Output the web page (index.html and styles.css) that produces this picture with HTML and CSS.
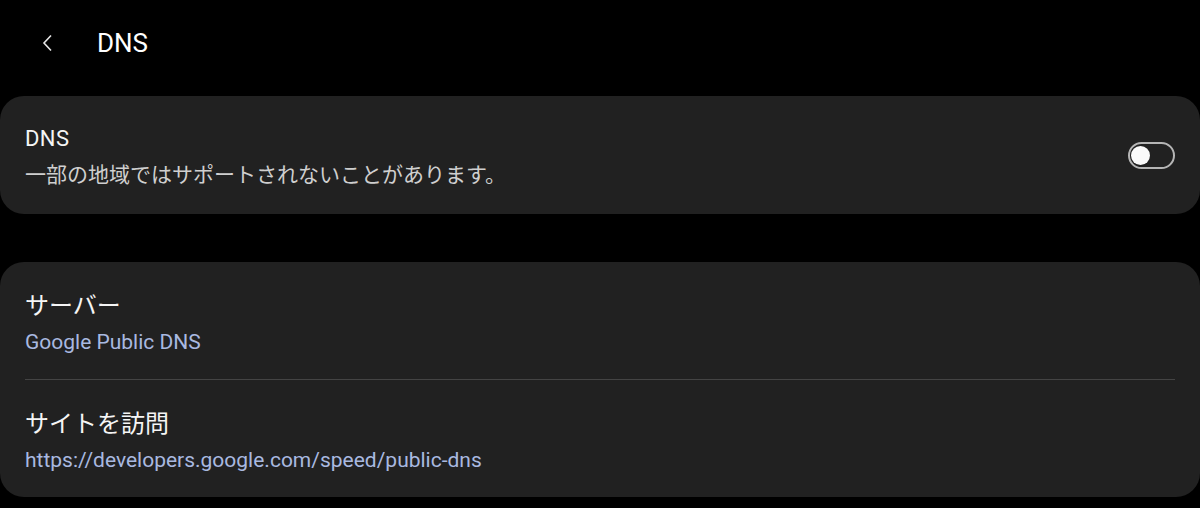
FILE: index.html
```html
<!DOCTYPE html>
<html lang="ja">
<head>
    <meta charset="UTF-8">
    <meta name="viewport" content="width=device-width, initial-scale=1.0">
    <title>DNS</title>
    <link rel="stylesheet" href="styles.css">
</head>
<body>
    <header class="top-bar">
        <button class="back" aria-label="戻る">
            <svg width="12" height="18" viewBox="0 0 12 18">
                <path d="M9 1.5 L2 9 L9 16.5" fill="none" stroke="#e6e6e6" stroke-width="1.6"/>
            </svg>
        </button>
        <h1>DNS</h1>
    </header>

    <main>
        <section class="card">
            <div class="row toggle-row">
                <div class="text">
                    <p class="title">DNS</p>
                    <p class="sub">一部の地域ではサポートされないことがあります。</p>
                </div>
                <div class="switch"><span class="knob"></span></div>
            </div>
        </section>

        <section class="card">
            <div class="row">
                <div class="text">
                    <p class="title jp">サーバー</p>
                    <p class="link">Google Public DNS</p>
                </div>
            </div>
            <div class="divider"></div>
            <div class="row">
                <div class="text">
                    <p class="title jp">サイトを訪問</p>
                    <p class="link">https://developers.google.com/speed/public-dns</p>
                </div>
            </div>
        </section>
    </main>
</body>
</html>
```

FILE: styles.css
```css
*{
    margin: 0;
    padding: 0;
    box-sizing: border-box;
}
body{
    background-color: #000;
    color: #f2f2f2;
    font-family: Roboto, "Noto Sans CJK JP", sans-serif;
    overflow: hidden;
}
.top-bar{
    height: 96px;
    display: flex;
    align-items: center;
    padding-left: 42px;
    padding-bottom: 10px;
}
.back{
    background: none;
    border: none;
    width: 14px;
    height: 20px;
    display: flex;
    align-items: center;
}
.top-bar h1{
    font-size: 26px;
    font-weight: 400;
    margin-left: 41px;
    color: #fff;
}
main{
    display: flex;
    flex-direction: column;
    gap: 48px;
}
.card{
    background-color: #212121;
    border-radius: 24px;
}
.row{
    padding: 27px 25px 18px;
}
.toggle-row{
    height: 118px;
    padding-top: 6px;
    padding-bottom: 0;
    display: flex;
    align-items: center;
    justify-content: space-between;
}
.title{
    font-size: 22px;
    line-height: 34px;
    letter-spacing: 0.4px;
    color: #f5f5f5;
}
.title.jp{
    font-size: 24px;
    letter-spacing: 0;
}
.sub{
    font-size: 21px;
    line-height: 38px;
    color: #cfcfcf;
}
.link{
    font-size: 21px;
    line-height: 38px;
    color: #a9b9e0;
}
.divider{
    height: 1px;
    margin: 0 25px;
    background-color: #444;
}
.switch{
    width: 47px;
    height: 27px;
    margin-top: -6px;
    border: 2px solid #b5b5b5;
    border-radius: 14px;
    padding: 1px;
    display: flex;
    align-items: center;
}
.knob{
    width: 19px;
    height: 19px;
    border-radius: 50%;
    background-color: #fafafa;
}
```
